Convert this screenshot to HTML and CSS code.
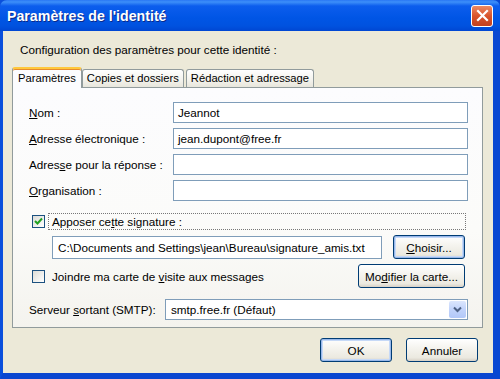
FILE: index.html
```html
<!DOCTYPE html>
<html lang="fr">
<head>
  <meta charset="UTF-8">
  <title>Paramètres de l'identité</title>
  <link rel="stylesheet" href="styles.css">
</head>
<body>
  <div class="window">
    <div class="titlebar">
      <span class="title">Paramètres de l'identité</span>
      <div class="close">
        <svg width="13" height="13" viewBox="0 0 13 13"><path d="M2 2 L11 11 M11 2 L2 11" stroke="#fff" stroke-width="2.2" stroke-linecap="square"/></svg>
      </div>
    </div>
    <div class="content">
      <p class="intro">Configuration des paramètres pour cette identité :</p>
      <div class="tabs">
        <div class="tab active">Paramètres</div>
        <div class="tab">Copies et dossiers</div>
        <div class="tab">Rédaction et adressage</div>
      </div>
      <div class="panel">
        <div class="fields">
          <label><u>N</u>om :</label>
          <div class="input">Jeannot</div>
          <label><u>A</u>dresse électronique :</label>
          <div class="input">jean.dupont@free.fr</div>
          <label>Adres<u>s</u>e pour la réponse :</label>
          <div class="input"></div>
          <label><u>O</u>rganisation :</label>
          <div class="input"></div>
        </div>
        <div class="check-row">
          <span class="checkbox checked">
            <svg width="9" height="9" viewBox="0 0 9 9"><path d="M1 4 L3.5 6.5 L8 1.5" fill="none" stroke="#21a121" stroke-width="2"/></svg>
          </span>
          <span class="focus">Apposer ce<u>t</u>te signature :</span>
        </div>
        <div class="sig-row">
          <div class="input path">C:\Documents and Settings\jean\Bureau\signature_amis.txt</div>
          <button class="btn focused"><u>C</u>hoisir...</button>
        </div>
        <div class="vcard-row">
          <span class="checkbox"></span>
          <span class="check-label">Joindre ma carte de <u>v</u>isite aux messages</span>
          <button class="btn wide">Mo<u>d</u>ifier la carte...</button>
        </div>
        <div class="smtp-row">
          <label>Serveur <u>s</u>ortant (SMTP):</label>
          <div class="select">
            <span>smtp.free.fr (Défaut)</span>
            <span class="arrow">
              <svg width="9" height="7" viewBox="0 0 9 7"><path d="M1 1.5 L4.5 5 L8 1.5" fill="none" stroke="#4d6185" stroke-width="2"/></svg>
            </span>
          </div>
        </div>
      </div>
      <div class="actions">
        <button class="btn focused">OK</button>
        <button class="btn">Annuler</button>
      </div>
    </div>
  </div>
</body>
</html>
```

FILE: styles.css
```css
body {
  margin: 0;
  font-family: 'Liberation Sans', Arial, sans-serif;
  font-size: 11.7px;
  color: #000;
  background: #fff;
}
.window {
  width: 500px;
  height: 379px;
  box-sizing: border-box;
  display: flex;
  flex-direction: column;
  background: #0b4fd8;
  border-left: 3px solid #0a4fdc;
  border-right: 7px solid #0847d2;
  border-bottom: 6px solid #0a46d0;
  box-shadow: inset 0 -2px 0 #8a8a8a;
}
.titlebar {
  height: 31px;
  margin-left: -3px;
  margin-right: -7px;
  padding: 0 7px 0 7px;
  display: flex;
  align-items: center;
  justify-content: space-between;
  border-radius: 7px 7px 0 0;
  background: linear-gradient(#2a77f4 0, #3d8ff9 2px, #0c5ded 6px, #0055e5 18px, #0052df 26px, #0046d2 31px);
}
.title {
  color: #fff;
  font-weight: bold;
  font-size: 14.2px;
  text-shadow: 1px 1px 0 #0a2a8a;
}
.close {
  width: 20px;
  height: 20px;
  border: 1px solid #fff;
  border-radius: 3px;
  display: flex;
  align-items: center;
  justify-content: center;
  background: linear-gradient(#ec8a64, #d9542c 50%, #c3401e);
}
.content {
  flex: 1;
  background: #ece9d8;
  padding: 0 10px 0 9px;
  display: flex;
  flex-direction: column;
}
.intro {
  margin: 12px 0 0 8px;
  line-height: 14px;
}
.tabs {
  display: flex;
  align-items: flex-end;
  height: 20px;
  margin-top: 10px;
  position: relative;
  z-index: 1;
  font-size: 11.2px;
}
.tab {
  height: 17px;
  line-height: 17px;
  padding: 0 4px;
  border: 1px solid #919b9c;
  border-bottom: none;
  border-radius: 3px 3px 0 0;
  background: linear-gradient(#fff, #f3f2ec 60%, #e8e6dc);
  margin-right: 2px;
}
.tab.active {
  height: 19px;
  line-height: 19px;
  margin-bottom: -1px;
  border-top: 2px solid #ffc83c;
  background: #fcfcfe;
  padding: 0 5px;
  margin-right: 0;
  box-shadow: inset 0 1px 0 #e68b2c;
}
.panel {
  height: 241px;
  box-sizing: border-box;
  border: 1px solid #919b9c;
  background: linear-gradient(#fcfcfe, #fbfbf9 60%, #f4f3ee);
  padding: 14px 14px 0 16px;
}
.fields {
  display: grid;
  grid-template-columns: 144px 1fr;
  row-gap: 5px;
  align-items: center;
}
.input {
  height: 21px;
  box-sizing: border-box;
  border: 1px solid #7f9db9;
  background: #fff;
  padding: 0 4px;
  line-height: 19px;
  white-space: nowrap;
  overflow: hidden;
}
.check-row {
  display: flex;
  align-items: center;
  margin-top: 12px;
  padding-left: 3px;
}
.checkbox {
  width: 13px;
  height: 13px;
  box-sizing: border-box;
  border: 1px solid #1c5180;
  background: linear-gradient(135deg, #dcdcd7, #fff);
  display: flex;
  align-items: center;
  justify-content: center;
  flex: none;
}
.focus {
  flex: 1;
  margin-left: 3px;
  margin-right: 2px;
  border: 1px dotted #777;
  height: 17px;
  line-height: 15px;
  box-sizing: border-box;
  padding-left: 3px;
}
.sig-row {
  display: flex;
  align-items: center;
  margin-top: 5px;
  padding-left: 23px;
}
.path {
  width: 330px;
  height: 23px;
  line-height: 21px;
  padding-left: 5px;
}
.btn {
  font-family: inherit;
  font-size: 11.7px;
  color: #000;
  width: 72px;
  height: 24px;
  border: 1px solid #003c74;
  border-radius: 3px;
  background: linear-gradient(#fff, #f5f4ef 40%, #ebe9e0 85%, #d6d0c5);
  padding: 0;
}
.btn.focused {
  box-shadow: inset 0 0 0 1px #98b8ea, inset 0 0 0 2px #c6d9f7;
}
.sig-row .btn {
  margin-left: 11px;
}
.vcard-row {
  display: flex;
  align-items: center;
  margin-top: 5px;
  padding-left: 3px;
  padding-right: 3px;
}
.check-label {
  flex: 1;
  margin-left: 7px;
}
.btn.wide {
  width: 107px;
}
.smtp-row {
  display: flex;
  align-items: center;
  margin-top: 11px;
}
.smtp-row label {
  width: 136px;
}
.select {
  flex: 1;
  height: 21px;
  box-sizing: border-box;
  border: 1px solid #7f9db9;
  background: #fff;
  display: flex;
  align-items: center;
  justify-content: space-between;
  padding-left: 5px;
  padding-right: 1px;
}
.arrow {
  width: 17px;
  height: 17px;
  border-radius: 2px;
  background: linear-gradient(#dbe6fd, #c1d3fb 50%, #b2c8f8);
  display: flex;
  align-items: center;
  justify-content: center;
}
.actions {
  display: flex;
  justify-content: flex-end;
  gap: 14px;
  margin-top: 10px;
  padding-right: 5px;
}
```
